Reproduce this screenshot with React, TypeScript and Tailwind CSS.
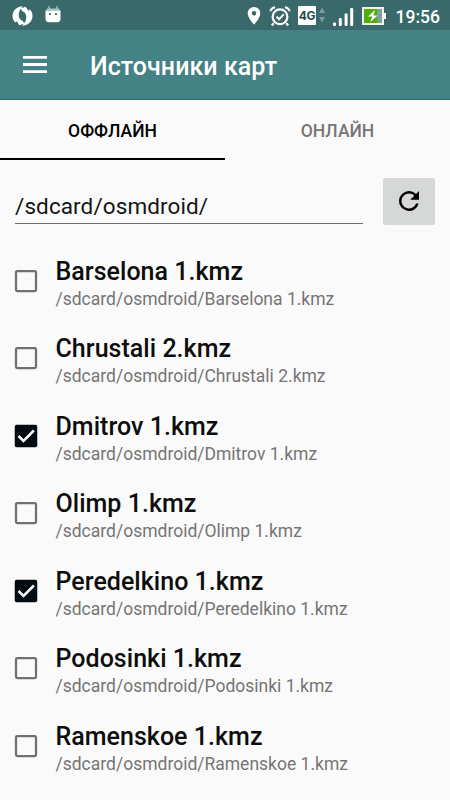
type MapSource = {
    name: string;
    checked: boolean;
};

const ROOT = "/sdcard/osmdroid/";

const sources: MapSource[] = [
    { name: "Barselona 1.kmz", checked: false },
    { name: "Chrustali 2.kmz", checked: false },
    { name: "Dmitrov 1.kmz", checked: true },
    { name: "Olimp 1.kmz", checked: false },
    { name: "Peredelkino 1.kmz", checked: true },
    { name: "Podosinki 1.kmz", checked: false },
    { name: "Ramenskoe 1.kmz", checked: false },
];

const SyncIcon = () => (
    <svg width="21" height="20" viewBox="0 0 20 20" fill="#fff">
        <path d="M10.5.3C4.5.3 0 4.6 0 10c0 2.6 1 4.8 2.6 6.4L4.3 15.2 6.8 19.2 12 17.6 10 14.8C7.2 13.6 6 11.2 6.2 8.4 6.4 5 8 2.6 10.5.3z" />
        <path d="M9.5 19.7C15.5 19.7 20 15.4 20 10c0-2.6-1-4.8-2.6-6.4L15.7 4.8 13.2.8 8 2.4 10 5.2C12.8 6.4 14 8.8 13.8 11.6 13.6 15 12 17.4 9.5 19.7z" />
    </svg>
);

const RobotIcon = () => (
    <svg width="16" height="18" viewBox="0 0 16 18">
        <path d="M3.6 1l1 3M12.4 1l-1 3" stroke="#a9c3c4" strokeWidth="1.2" />
        <path d="M1.6 3.5h12.8v2H1.6z" fill="#a9c3c4" />
        <path d="M.5 5.5h15v8.2a3.5 3.5 0 0 1-3.5 3.5H4a3.5 3.5 0 0 1-3.5-3.5z" fill="#fff" />
        <path d="M4 9.2h2M10 9.2h2" stroke="#3a696c" strokeWidth="1.8" />
    </svg>
);

const PinIcon = () => (
    <svg width="14" height="18" viewBox="0 0 14 18">
        <path
            d="M7 0a6.3 6.3 0 0 0-6.3 6.3C.7 11 7 17.6 7 17.6s6.3-6.6 6.3-11.3A6.3 6.3 0 0 0 7 0zm0 8.6A2.3 2.3 0 1 1 7 4a2.3 2.3 0 0 1 0 4.6z"
            fill="#fff"
        />
    </svg>
);

const AlarmIcon = () => (
    <svg width="22" height="21" viewBox="0 0 22 21" fill="none" stroke="#fff">
        <circle cx="11" cy="10.8" r="7.4" strokeWidth="2.2" />
        <path d="M1.3 5.2Q2.5 2 6 1.3M20.7 5.2Q19.5 2 16 1.3" strokeWidth="2" />
        <path d="M4.8 17.2l-2 2.3M17.2 17.2l2 2.3" strokeWidth="2.2" />
        <path d="M7.5 10.6l2.6 2.6 4.6-4.8" strokeWidth="2" />
    </svg>
);

const SignalIcon = () => (
    <svg width="21" height="18" viewBox="0 0 21 18" fill="#fff">
        <rect x="0" y="14.5" width="3" height="3.5" rx="1" />
        <rect x="5.8" y="10" width="3" height="8" rx="1" />
        <rect x="11.6" y="5.5" width="3" height="12.5" rx="1" />
        <rect x="17.2" y="0" width="3" height="18" rx="1" />
    </svg>
);

const BatteryIcon = () => (
    <svg width="24" height="18" viewBox="0 0 24 18">
        <rect x="1" y="1" width="20" height="16" fill="#7fa09c" stroke="#f2f5ee" strokeWidth="2" />
        <rect x="2" y="2" width="13" height="14" fill="#52ac0c" />
        <rect x="21.5" y="6" width="2.5" height="6" fill="#fff" />
        <path d="M13 3L6 9.6h4.4L8.2 15 15.7 8.4h-4.3z" fill="#fff" />
    </svg>
);

const StatusBar = () => (
    <div className="flex h-[30px] items-center bg-[#3a696c] text-white">
        <div className="ml-[12px] mt-[1px]"><SyncIcon /></div>
        <div className="ml-[12px] -mt-[2px]"><RobotIcon /></div>
        <div className="ml-[186px] mt-[1px]"><PinIcon /></div>
        <div className="ml-[8px] mt-[2px]"><AlarmIcon /></div>
        <div className="ml-[7px] mt-[1px] flex h-[19px] w-[18px] items-center justify-center rounded-[1px] bg-white font-[Inter,sans-serif] text-[12px] font-bold leading-none tracking-[-0.3px] text-[#234b50]">
            4G
        </div>
        <svg className="ml-[3px]" width="6" height="16" viewBox="0 0 6 16" fill="#7d9c9d">
            <path d="M3 .5l3 5.5H0zM3 15.5l3-5.5H0z" />
        </svg>
        <div className="ml-[8px] mt-[4px]"><SignalIcon /></div>
        <div className="ml-[8px] mt-[1px]"><BatteryIcon /></div>
        <span className="ml-[9.5px] mt-[3px] text-[17.5px] font-medium leading-5">19:56</span>
    </div>
);

const Checkbox = ({ checked }: { checked: boolean }) => (
    <svg width="30" height="30" viewBox="0 0 24 24" className="shrink-0">
        {checked ? (
            <>
                <rect x="3" y="3" width="18" height="18" rx="1.6" fill="#020c12" />
                <path d="M6 12l4 4 8.3-8.4" fill="none" stroke="#fafafa" strokeWidth="2" />
            </>
        ) : (
            <rect x="4" y="4" width="16" height="16" rx="1" fill="none" stroke="#707070" strokeWidth="1.8" />
        )}
    </svg>
);

const SourceRow = ({ name, checked }: MapSource) => (
    <li className="flex h-[77.5px] items-center pl-[10.5px]">
        <Checkbox checked={checked} />
        <div className="ml-[15px] mt-[6.5px] whitespace-nowrap">
            <div className="text-[25px] font-medium leading-[30px] tracking-[0.03px] text-[#0d0d0d]">{name}</div>
            <div className="text-[17.5px] leading-[25px] text-[#757575]">{ROOT + name}</div>
        </div>
    </li>
);

const App = () => {
    return (
        <main className="h-[800px] w-[450px] overflow-hidden bg-[#fafafa] font-[Roboto,sans-serif]">
            <StatusBar />
            <header className="flex h-[70px] items-center border-b border-[#28706f] bg-[#448285] text-white">
                <svg className="ml-[23px]" width="24" height="17" viewBox="0 0 24 17" fill="#fff">
                    <path d="M0 0h24v2.8H0zM0 7.1h24v2.8H0zM0 14.2h24V17H0z" />
                </svg>
                <h1 className="ml-[43px] mt-[4px] text-[25px] font-medium leading-[30px] tracking-[0.05px]">Источники карт</h1>
            </header>

            <nav className="flex h-[60px] text-[17.5px] font-medium">
                <button className="h-full w-1/2 border-b-2 border-black pt-1 text-black">ОФФЛАЙН</button>
                <button className="h-full w-1/2 border-b-2 border-transparent pt-1 text-[#757575]">ОНЛАЙН</button>
            </nav>

            <div className="flex h-[82px] items-start pl-[15px] pt-[18px]">
                <div className="flex h-[46px] w-[347.5px] items-end border-b border-[#6d6d6d] pb-[2px] text-[22.5px] leading-[30px] tracking-[0.1px] text-[#151515]">
                    {ROOT}
                </div>
                <button className="ml-[20px] flex h-[47px] w-[52.5px] items-center justify-center rounded-[2px] bg-[#d6d7d7] pb-[1px]">
                    <svg width="30" height="30" viewBox="0 0 24 24">
                        <path d="M17.65 6.35A7.96 7.96 0 0 0 12 4a8 8 0 1 0 7.73 10h-2.08A6 6 0 1 1 12 6c1.66 0 3.14.69 4.22 1.78L13 11h7V4z" />
                    </svg>
                </button>
            </div>

            <ul>
                {sources.map((source) => (
                    <SourceRow key={source.name} {...source} />
                ))}
            </ul>
        </main>
    );
};

export default App;
